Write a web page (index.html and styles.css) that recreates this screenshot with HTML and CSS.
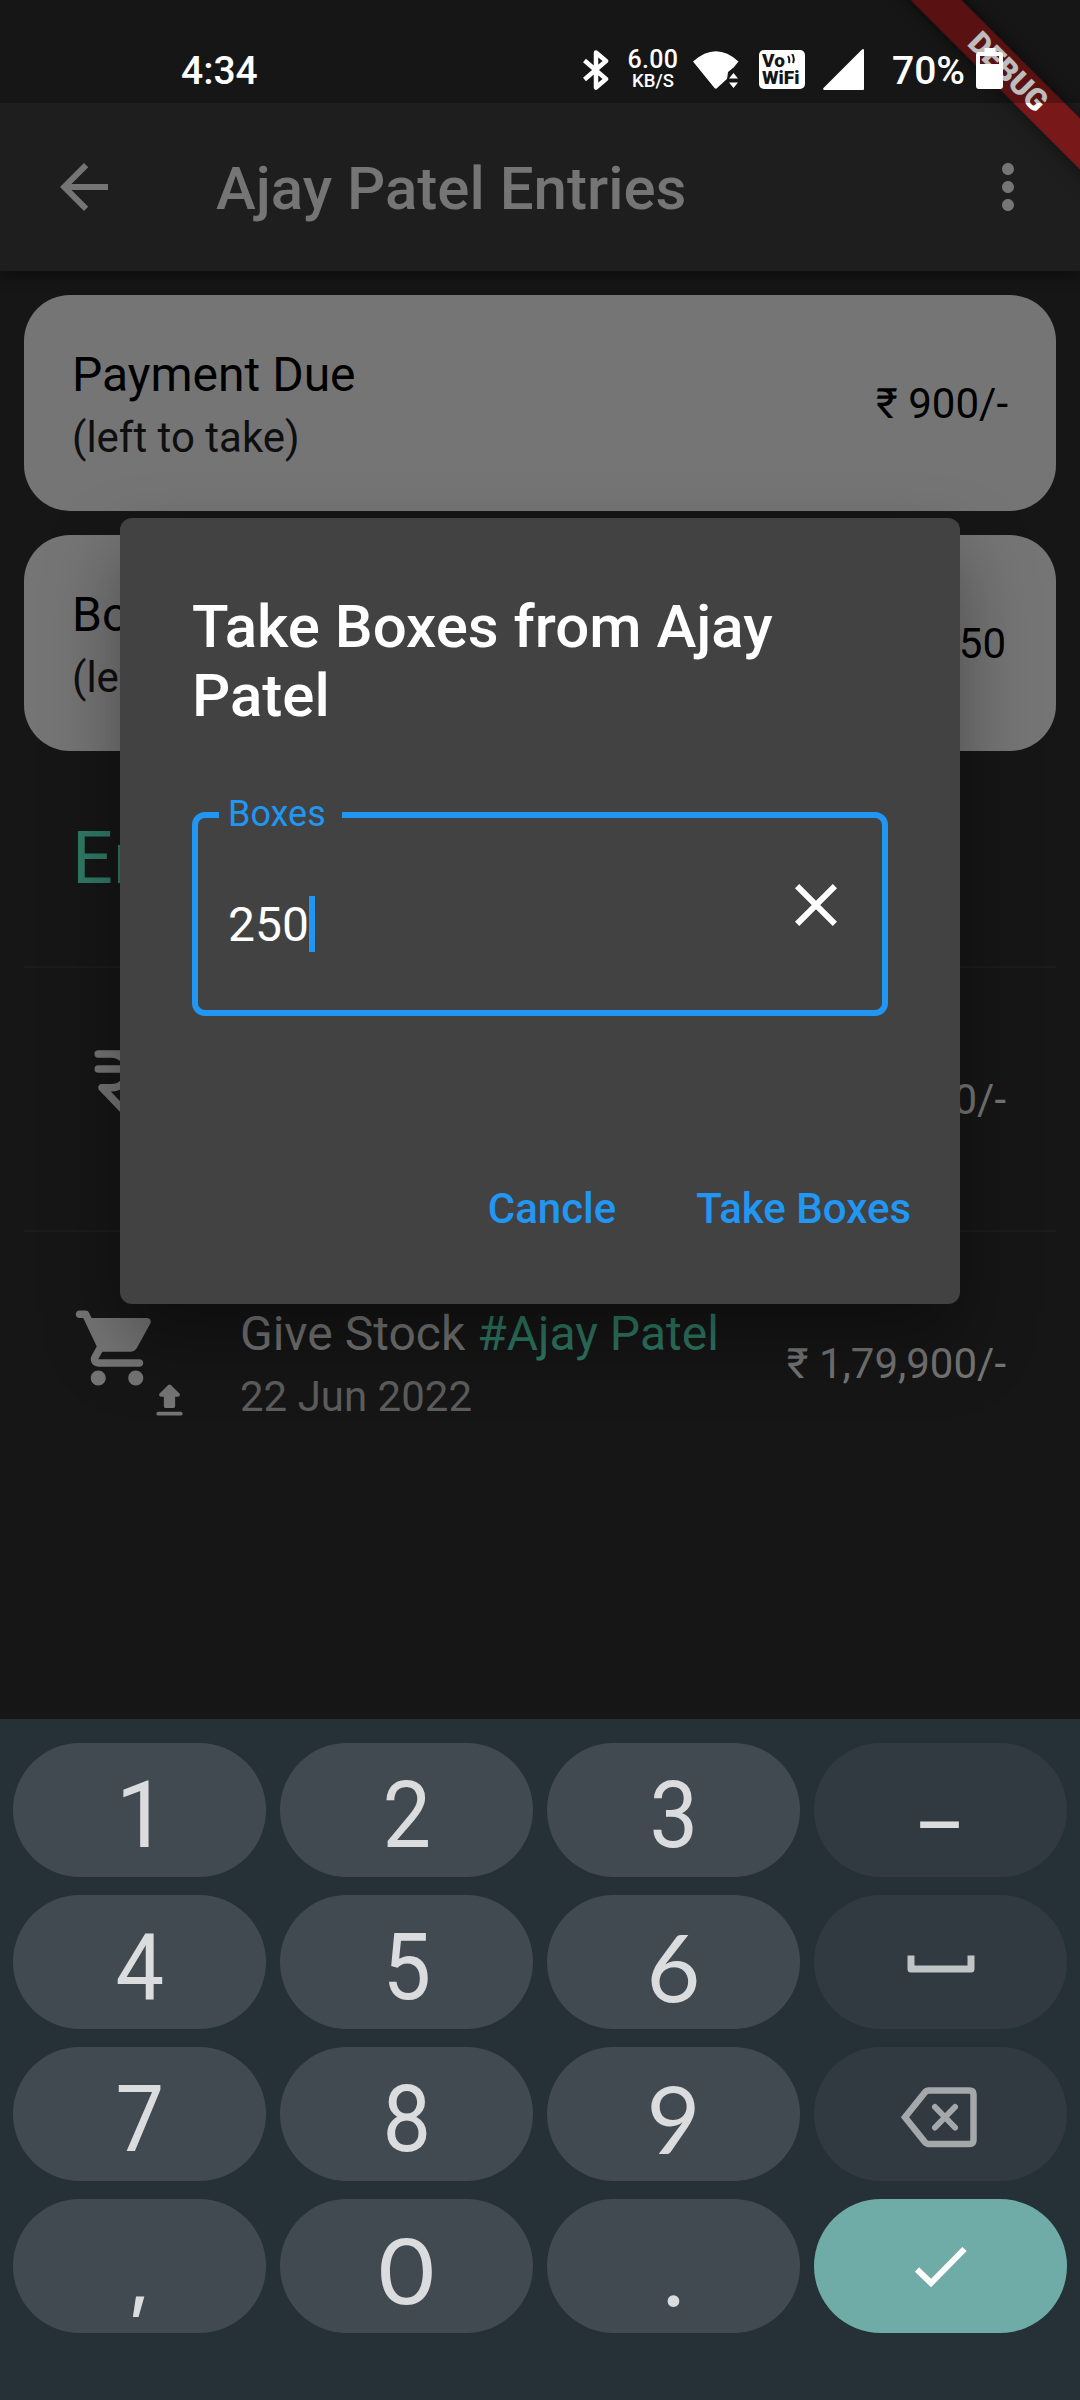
FILE: index.html
```
<!DOCTYPE html>
<html lang="en">
<head>
<meta charset="utf-8">
<title>Ajay Patel Entries</title>
<link rel="stylesheet" href="styles.css">
</head>
<body>
<div class="screen">
  <header class="app-bar">
    <svg class="icon" viewBox="0 0 24 24"><path d="M20 11H7.83l5.59-5.59L12 4l-8 8 8 8 1.41-1.41L7.83 13H20v-2z"/></svg>
    <h1 class="app-title">Ajay Patel Entries</h1>
    <svg class="icon" viewBox="0 0 24 24"><path d="M12 8c1.1 0 2-.9 2-2s-.9-2-2-2-2 .9-2 2 .9 2 2 2zm0 2c-1.1 0-2 .9-2 2s.9 2 2 2 2-.9 2-2-.9-2-2-2zm0 6c-1.1 0-2 .9-2 2s.9 2 2 2 2-.9 2-2-.9-2-2-2z"/></svg>
  </header>

  <main class="content">
    <section class="card">
      <div class="tile-text"><div class="tile-title">Payment Due</div><div class="tile-sub">(left to take)</div></div>
      <div class="amount">₹ 900/-</div>
    </section>
    <section class="card">
      <div class="tile-text"><div class="tile-title">Boxes Due</div><div class="tile-sub">(left to take)</div></div>
      <div class="amount boxes">250</div>
    </section>
    <h2 class="heading">Entries</h2>
    <div class="row">
      <div class="lead">
        <svg class="lead-icon" viewBox="0 0 24 24"><path class="rupee" d="M7 4h10M7 8h10M10.5 4a4.5 4.5 0 0 1 0 9H8l7 7.3"/></svg>
      </div>
      <div class="tile-text"></div>
      <div class="amount">₹ 1,79,000/-</div>
    </div>
    <div class="row">
      <div class="lead">
        <svg class="lead-icon" viewBox="0 0 24 24"><path d="M7 18c-1.1 0-1.99.9-1.99 2S5.9 22 7 22s2-.9 2-2-.9-2-2-2zM1 3c0 .55.45 1 1 1h1l3.6 7.59-1.35 2.44C4.52 15.37 5.48 17 7 17h11c.55 0 1-.45 1-1s-.45-1-1-1H7l1.1-2h7.45c.75 0 1.41-.41 1.75-1.03l3.58-6.49c.37-.66-.11-1.48-.87-1.48H5.21l-.67-1.43c-.16-.35-.52-.57-.9-.57H2c-.55 0-1 .45-1 1zm16 15c-1.1 0-1.99.9-1.99 2s.89 2 1.99 2 2-.9 2-2-.9-2-2-2z"/></svg>
        <svg class="lead-badge" viewBox="0 0 24 24"><path d="M10 16h4c.55 0 1-.45 1-1v-5h1.59c.89 0 1.34-1.08.71-1.71L12.71 3.7c-.39-.39-1.02-.39-1.41 0L6.71 8.29c-.63.63-.19 1.71.7 1.71H9v5c0 .55.45 1 1 1zm-4 2h12c.55 0 1 .45 1 1s-.45 1-1 1H6c-.55 0-1-.45-1-1s.45-1 1-1z"/></svg>
      </div>
      <div class="tile-text"><div class="tile-title">Give Stock <span class="tag">#Ajay Patel</span></div><div class="tile-sub">22 Jun 2022</div></div>
      <div class="amount">₹ 1,79,900/-</div>
    </div>
  </main>

  <section class="keyboard">
    <div class="key"><span class="one">1</span></div>
    <div class="key"><span>2</span></div>
    <div class="key"><span>3</span></div>
    <div class="key fn"><span class="dash">–</span></div>
    <div class="key"><span>4</span></div>
    <div class="key"><span>5</span></div>
    <div class="key"><span class="lato">6</span></div>
    <div class="key fn"><svg class="key-icon" viewBox="0 0 120 134"><path class="space" d="M30 60.500V74H90V60.500"/></svg></div>
    <div class="key"><span>7</span></div>
    <div class="key"><span>8</span></div>
    <div class="key"><span class="lato">9</span></div>
    <div class="key fn"><svg class="key-icon" viewBox="0 0 120 134"><path class="back" d="M48 43.500H88.500q4 0 4 4V93q0 4-4 4H48q-3 0-5-3L24 70.300 43 46.500q2-3 5-3Z"/><path class="back-x" d="M54 60l20 20.500M74 60l-20 20.500"/></svg></div>
    <div class="key"><span class="comma">,</span></div>
    <div class="key"><span class="zero">0</span></div>
    <div class="key"><span class="lato">.</span></div>
    <div class="key enter"><svg class="key-icon" viewBox="0 0 120 134"><path class="check" d="M36 70.500L50 84l33.500-34"/></svg></div>
  </section>

  <section class="dialog">
    <h2 class="dialog-title">Take Boxes from Ajay Patel</h2>
    <div class="field">
      <span class="field-label">Boxes</span>
      <span class="field-value">250</span><span class="cursor"></span>
      <svg class="field-clear" viewBox="0 0 24 24"><path d="M19 6.410L17.590 5 12 10.590 6.410 5 5 6.410 10.590 12 5 17.590 6.410 19 12 13.410 17.590 19 19 17.590 13.410 12z"/></svg>
    </div>
    <div class="actions"><span>Cancle</span><span>Take Boxes</span></div>
  </section>

  <div class="banner">DEBUG</div>

  <div class="status-bar">
    <span class="clock">4:34</span>
    <svg class="bt" viewBox="0 0 27 40"><path d="M2.500 10.500L24 29 14 37.500V2.500L24 11 2.500 29.500"/></svg>
    <div class="speed"><span class="speed-n">6.00</span><span class="speed-u">KB/S</span></div>
    <svg class="wifi" viewBox="0 0 46 40"><path d="M0 11.500Q23-9 45.500 11.500L39 19.500 35 24.500V28L23.500 38.500Q22.500 39 21.500 38Z"/><path class="gap" d="M40 18h6v23H32.500L35 22z"/><path d="M36 28.500l4.500-5.500 4.500 5.500zM36 32.500l4.500 5.500 4.500-5.500z"/></svg>
    <div class="vowifi"><span>Vo<svg class="waves" viewBox="0 0 8 10"><path d="M1 2q2 3 1 7M5 0q3 4 1 9"/></svg></span><span>WiFi</span></div>
    <svg class="signal" viewBox="0 0 41 41"><path d="M41 1v39q0 1-1 1H1q-1.500-.5-.5-2L39 .5q1.500-1 2 .5z"/></svg>
    <span class="percent">70%</span>
    <svg class="battery" viewBox="0 0 27 41"><path fill-rule="evenodd" d="M8.500 0h11v4H24q3 0 3 3v31q0 3-3 3H3q-3 0-3-3V7q0-3 3-3h5.500zM4 8v8h19V8z"/></svg>
  </div>
</div>
</body>
</html>
```
FILE: styles.css
```
* { box-sizing: border-box; }
body { margin: 0; background: #161616; font-family: Roboto, sans-serif; }
h1, h2 { margin: 0; font-weight: 500; }
svg { display: block; flex: none; }
.screen { position: relative; width: 1080px; height: 2400px; overflow: hidden; background: #161616; display: flex; flex-direction: column; }

/* app bar */
.app-bar { height: 271px; flex: none; padding: 103px 36px 0 48px; display: flex; align-items: center; background: #1e1e1e; box-shadow: 0 6px 14px rgba(0,0,0,.4); fill: #757575; }
.icon { width: 72px; height: 72px; }
.app-title { flex: 1; margin-left: 96px; padding-top: 4px; font-size: 60px; line-height: 70px; color: #757575; }

/* cards and entry rows */
.content { flex: 1; padding: 24px 24px 0; display: flex; flex-direction: column; }
.card { height: 216px; margin-bottom: 24px; padding: 0 48px; border-radius: 46px; background: #757575; color: #000; display: flex; align-items: center; }
.tile-text { flex: 1; align-self: flex-start; padding-top: 50px; white-space: nowrap; }
.tile-title { font-size: 48px; line-height: 60px; }
.tile-sub { font-size: 42px; line-height: 65px; color: #0f0f0f; }
.amount { padding-top: 2px; font-size: 42px; line-height: 50px; white-space: nowrap; }
.amount.boxes, .row .amount { margin-right: 2px; }
.heading { height: 191px; padding: 42px 48px 0; font-size: 72px; line-height: 84px; font-weight: 400; color: #2f7a64; }
.row { height: 264px; padding: 0 48px; border-top: 2px solid #1c1c1c; display: flex; align-items: center; color: #757575; }
.row .tile-text { padding-top: 72px; }
.row .tile-sub { color: #5d5d5d; }
.tag { color: #2f7a64; }
.lead { position: relative; width: 168px; align-self: flex-start; padding-top: 71px; fill: #757575; }
.lead-icon { width: 90px; height: 90px; }
.lead-badge { position: absolute; left: 75px; top: 146px; width: 45px; height: 45px; }
.rupee { fill: none; stroke: #757575; stroke-width: 2; stroke-linecap: round; stroke-linejoin: round; }

/* dialog */
.dialog { position: absolute; left: 120px; top: 518px; width: 840px; height: 786px; padding: 74px 72px 0; border-radius: 12px; background: #424242; color: #fff; box-shadow: 0 36px 75px rgba(0,0,0,.36); }
.dialog-title { font-size: 60px; line-height: 69px; }
.field { position: relative; height: 204px; margin-top: 82px; padding: 0 30px; border: 6px solid #2196f3; border-radius: 13px; display: flex; align-items: center; }
.field-label { position: absolute; left: 21px; top: -25px; width: 123px; padding-left: 9px; background: #424242; color: #2196f3; font-size: 36px; line-height: 42px; }
.field-value { padding-top: 22px; font-size: 48px; line-height: 56px; }
.cursor { width: 6px; height: 56px; margin-top: 19px; background: #2196f3; }
.field-clear { width: 72px; height: 72px; margin: -18px 0 0 auto; fill: #fff; }
.actions { margin-top: 168px; margin-right: -23px; display: flex; justify-content: flex-end; gap: 80px; font-size: 42px; line-height: 50px; font-weight: 500; color: #2196f3; }

/* keyboard */
.keyboard { height: 681px; flex: none; padding: 24px 13px 66px; background: #263137; display: grid; grid-template-columns: repeat(4, 253px); grid-template-rows: repeat(4, 134px); gap: 18px 14px; }
.key { border-radius: 67px; background: #424a51; color: #dadcde; display: flex; align-items: center; justify-content: center; font-size: 92px; line-height: 108px; }
.key span { padding-top: 11px; transform: scaleX(.94); }
.key .one { transform: translateX(2px); }
.key .lato { padding-top: 7px; font-family: Lato, sans-serif; font-size: 93px; transform: none; }
.key .zero { font-family: Inter, sans-serif; font-size: 90px; transform: scaleX(1.1); }
.key .comma { padding-top: 24px; font-family: Inter, sans-serif; font-size: 72px; font-weight: 500; transform: none; }
.key .dash { padding-top: 7px; font-family: "Open Sans", sans-serif; font-weight: 500; transform: translateX(-1px); }
.fn { background: #313a41; }
.enter { background: #6faca8; }
.key-icon { width: 120px; height: 134px; fill: none; }
.space { stroke: #c0c4c6; stroke-width: 7; stroke-linejoin: round; }
.back { stroke: #a4a8ab; stroke-width: 6.500px; }
.back-x { stroke: #a4a8ab; stroke-width: 6px; stroke-linecap: round; }
.check { stroke: #fff; stroke-width: 6px; }

/* corner ribbon */
.banner { position: absolute; left: 858px; top: 54px; width: 300px; height: 36px; transform: rotate(45deg); background: #781819; color: #fff; box-shadow: 0 0 18px rgba(0,0,0,.5); font-size: 30.600px; line-height: 36px; font-weight: 900; text-align: center; }

/* status bar */
.status-bar { position: absolute; left: 0; top: 0; width: 1080px; height: 103px; padding: 0 76px 0 181px; display: flex; align-items: flex-start; background: rgba(0,0,0,.26); color: #fff; fill: #fff; }
.clock { width: 401px; margin-top: 47px; font-size: 39px; line-height: 48px; font-weight: 500; }
.bt { width: 27px; height: 40px; margin-top: 50px; fill: none; stroke: #fff; stroke-width: 4.500px; stroke-linejoin: round; }
.speed { width: 84px; margin: 47px 0 0; padding-left: 4px; display: flex; flex-direction: column; align-items: center; font-weight: 500; }
.speed-n { font-size: 25px; line-height: 25px; letter-spacing: .3px; }
.speed-u { font-size: 18.500px; line-height: 18px; }
.wifi { width: 46px; height: 40px; margin: 50px 0 0; }
.gap { fill: #161616; }
.vowifi { width: 46px; height: 39px; margin: 50px 0 0 20px; padding: 2px 0 0 3px; border-radius: 5px; background: #fff; color: #161616; font-size: 19px; line-height: 17px; font-weight: 900; display: flex; flex-direction: column; }
.vowifi span { display: flex; }
.waves { width: 8px; height: 10px; margin: 2px 0 0 2px; fill: none; stroke: #161616; stroke-width: 2px; }
.signal { width: 41px; height: 41px; margin: 49px 0 0 18px; }
.percent { width: 84px; margin: 47px 0 0 28px; font-size: 39px; line-height: 48px; font-weight: 500; }
.battery { width: 27px; height: 41px; margin-top: 48px; }
```
